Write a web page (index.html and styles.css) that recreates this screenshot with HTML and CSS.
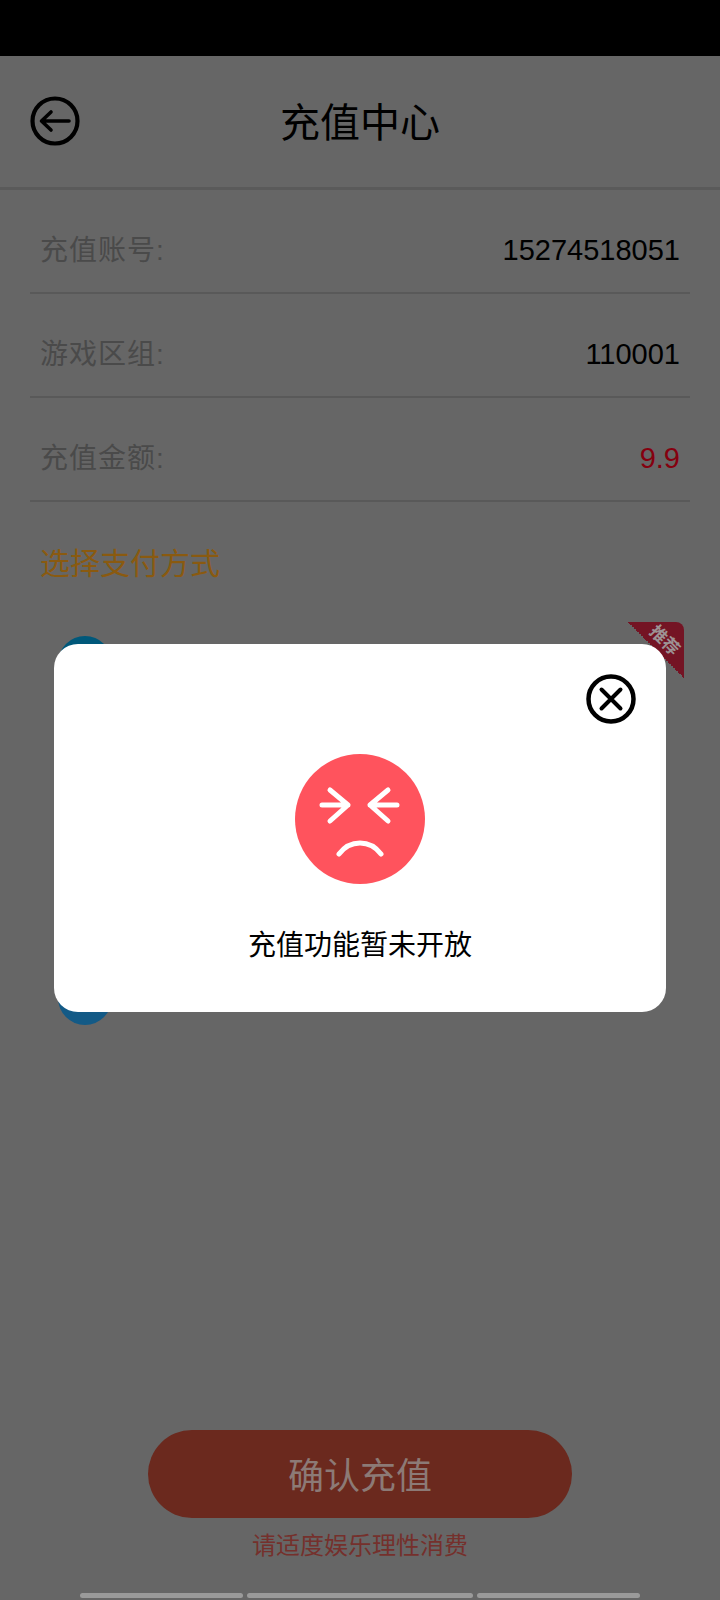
FILE: index.html
```html
<!DOCTYPE HTML>
<html>
    <head>
        <meta charset='utf-8'/>
        <title>充值中心</title>
        <link rel="stylesheet" href="styles.css">
    </head>
    <body>
        <div id="status"></div>
        <div id="header">
            <svg class="back" viewBox="0 0 50 50">
                <circle cx="25" cy="25" r="22.5" fill="none" stroke="#000" stroke-width="4.200"/>
                <path d="M39 25H12M21 16L11.500 25L21 34" fill="none" stroke="#000" stroke-width="3.600" stroke-linecap="round" stroke-linejoin="round"/>
            </svg>
            <div class="title">充值中心</div>
        </div>
        <div id="info">
            <div class="row">
                <span class="label">充值账号:</span>
                <span class="val">15274518051</span>
            </div>
            <div class="row">
                <span class="label">游戏区组:</span>
                <span class="val">110001</span>
            </div>
            <div class="row">
                <span class="label">充值金额:</span>
                <span class="val money">9.9</span>
            </div>
        </div>
        <div class="pay_title">选择支付方式</div>
        <div id="pay_list">
            <div class="pay_item">
                <div class="pay_icon blue1"></div>
                <div class="tag"><span>推荐</span></div>
            </div>
            <div class="pay_item">
                <div class="pay_icon blue2"></div>
            </div>
        </div>
        <div id="bottom">
            <div class="confirm">确认充值</div>
            <div class="tip">请适度娱乐理性消费</div>
        </div>
        <div id="nav_bars">
            <div class="bar bar1"></div>
            <div class="bar bar2"></div>
            <div class="bar bar1"></div>
        </div>
        <div id="dialog">
            <svg class="close" viewBox="0 0 50 50">
                <circle cx="25" cy="25" r="22.500" fill="none" stroke="#000" stroke-width="4.500"/>
                <path d="M15.500 15.500L34.500 34.500M34.500 15.500L15.500 34.500" fill="none" stroke="#000" stroke-width="4" stroke-linecap="round"/>
            </svg>
            <svg class="face" viewBox="0 0 130 130">
                <circle cx="65" cy="65" r="65" fill="#ff535d"/>
                <path d="M27 51H53M35 36L53 51L35 67M102 51H75M93 36L75 51L93 67M44 100C50 92 57 89 65 89S80 92 86 100" fill="none" stroke="#fff" stroke-width="5" stroke-linecap="round" stroke-linejoin="round"/>
            </svg>
            <div class="msg">充值功能暂未开放</div>
        </div>
    </body>
</html>
```

FILE: styles.css
```css
html,body{
    margin: 0;
    padding: 0;
}
body{
    position: relative;
    width: 720px;
    height: 1600px;
    overflow: hidden;
    background: #666;
    font-family: "Liberation Sans", "Noto Sans CJK SC", sans-serif;
}
#status{
    height: 56px;
    background: #000;
}
#header{
    height: 131px;
    display: flex;
    align-items: center;
    justify-content: center;
    position: relative;
    border-bottom: 3px solid #5a5a5a;
}
.back{
    position: absolute;
    left: 30px;
    top: 40px;
    width: 50px;
    height: 50px;
}
.title{
    padding-top: 2px;
    font-size: 40px;
    line-height: 50px;
    color: #000;
}
#info{
    margin: 0 30px;
}
.row{
    box-sizing: border-box;
    height: 104px;
    padding: 40px 10px 0;
    display: flex;
    align-items: baseline;
    justify-content: space-between;
    border-bottom: 2px solid #595959;
}
.label{
    font-size: 28px;
    line-height: 40px;
    letter-spacing: 1px;
    color: #4a4a4a;
}
.val{
    font-size: 29px;
    line-height: 40px;
    color: #000;
}
.money{
    color: #85000f;
}
.pay_title{
    margin: 42px 40px 0;
    font-size: 30px;
    line-height: 40px;
    color: #8a5a10;
}
#pay_list{
    height: 389px;
    margin: 52px 0 0;
    display: flex;
    flex-direction: column;
    justify-content: space-between;
}
.pay_item{
    position: relative;
    height: 54px;
    padding-left: 58px;
}
.pay_icon{
    width: 54px;
    height: 54px;
    border-radius: 50%;
}
.blue1{
    background: #00587a;
}
.blue2{
    background: #135a86;
}
.tag{
    position: absolute;
    right: 36px;
    top: -14px;
    width: 56px;
    height: 56px;
    background: linear-gradient(to top right, transparent 50%, #741424 50%);
    border-top-right-radius: 8px;
}
.tag span{
    display: block;
    position: absolute;
    left: 19px;
    top: 10px;
    font-size: 17px;
    line-height: 18px;
    font-weight: bold;
    white-space: nowrap;
    color: #9d9294;
    transform: rotate(45deg);
}
#bottom{
    margin-top: 405px;
    display: flex;
    flex-direction: column;
    align-items: center;
}
.confirm{
    width: 424px;
    height: 88px;
    border-radius: 44px;
    background: #6b291e;
    color: #8c7a76;
    font-size: 36px;
    line-height: 94px;
    text-align: center;
}
.tip{
    margin-top: 11px;
    font-size: 24px;
    line-height: 34px;
    color: #75302c;
}
#nav_bars{
    margin-top: 30px;
    padding: 0 80px;
    display: flex;
    gap: 4px;
}
.bar{
    height: 5px;
    border-radius: 3px;
    background: #9a9a9a;
}
.bar1{
    width: 163px;
}
.bar2{
    width: 226px;
}
#dialog{
    position: absolute;
    left: 54px;
    top: 644px;
    width: 612px;
    height: 368px;
    border-radius: 24px;
    background: #fff;
    display: flex;
    flex-direction: column;
    align-items: center;
}
.close{
    position: absolute;
    right: 30px;
    top: 30px;
    width: 50px;
    height: 50px;
}
.face{
    margin-top: 110px;
    width: 130px;
    height: 130px;
}
.msg{
    margin-top: 44px;
    font-size: 28px;
    line-height: 36px;
    color: #000;
}
```
